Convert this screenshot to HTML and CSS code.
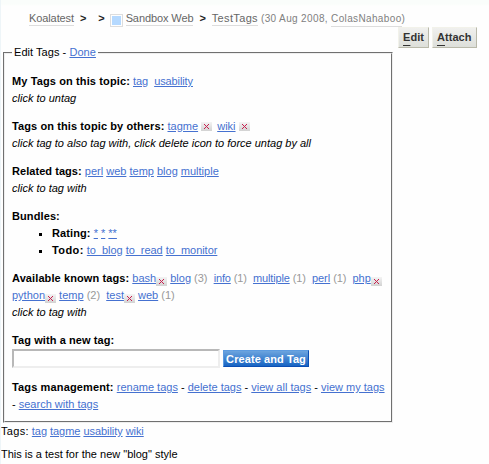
FILE: index.html
```html
<!DOCTYPE html>
<html lang="en">
<head>
<meta charset="utf-8">
<title>TestTags</title>
<link rel="stylesheet" href="styles.css">
</head>
<body>
<svg class="defs" width="0" height="0"><defs>
<linearGradient id="g" x1="0" y1="0" x2="0" y2="1"><stop offset="0" stop-color="#f4f4f4"/><stop offset="1" stop-color="#d2d2d2"/></linearGradient>
<symbol id="del" viewBox="0 0 11 9"><rect width="11" height="9" fill="url(#g)"/><path d="M3 2h1v1h1v1h1v-1h1v-1h1v1h-1v1h-1v1h1v1h1v1h-1v-1h-1v-1h-1v1h-1v1h-1v-1h1v-1h1v-1h-1v-1h-1z" fill="#c8204e"/></symbol>
</defs></svg>
<header class="crumbs"><a>Koalatest</a><b>&gt;</b><b class="second">&gt;</b><i class="swatch"></i><a>Sandbox Web</a><b class="third">&gt;</b><a class="topic">TestTags</a><small>(30 Aug 2008, <a>ColasNahaboo</a>)</small></header>
<nav class="actions"><a class="button"><u>E</u>dit</a><a class="button"><u>A</u>ttach</a></nav>
<fieldset class="panel">
<legend>Edit Tags - <a href="#">Done</a></legend>
<p class="mine"><b>My Tags on this topic:</b> <a href="#">tag</a>&nbsp; <a href="#">usability</a><br><em>click to untag</em></p>
<p><b>Tags on this topic by others:</b> <a href="#">tagme</a> <svg class="del mid"><use href="#del"/></svg>&nbsp;<a href="#">wiki</a> <svg class="del mid"><use href="#del"/></svg><br><em>click tag to also tag with, click delete icon to force untag by all</em></p>
<p class="related"><b>Related tags:</b> <a href="#">perl</a> <a href="#">web</a> <a href="#">temp</a> <a href="#">blog</a> <a href="#">multiple</a><br><em>click to tag with</em></p>
<p class="bundles"><b>Bundles:</b></p>
<ul><li><b>Rating:</b> <a href="#">*</a> <a href="#">*</a> <a href="#">**</a></li><li class="todo"><b>Todo:</b> <a href="#">to_blog</a> <a href="#">to_read</a> <a href="#">to_monitor</a></li></ul>
<p><b>Available known tags:</b> <a href="#">bash</a><svg class="del"><use href="#del"/></svg> <a href="#">blog</a> <span>(3)</span>&nbsp; <a href="#" class="tight">info</a> <span class="tight">(1)</span>&nbsp; <a href="#" class="tight">multiple</a> <span class="tight">(1)</span>&nbsp; <a href="#">perl</a> <span class="tight">(1)</span>&nbsp; <a href="#">php</a><svg class="del"><use href="#del"/></svg><br><a href="#">python</a><svg class="del"><use href="#del"/></svg> <a href="#">temp</a> <span>(2)</span>&nbsp; <a href="#">test</a><svg class="del"><use href="#del"/></svg> <a href="#">web</a> <span>(1)</span><br><em>click to tag with</em></p>
<form><label for="tag">Tag with a new tag:</label><div class="row"><input id="tag"><button type="button">Create and Tag</button></div></form>
<p class="manage"><b>Tags management:</b> <a href="#">rename tags</a> - <a href="#">delete tags</a> - <a href="#">view all tags</a> - <a href="#">view my tags</a><br>- <a href="#">search with tags</a></p>
</fieldset>
<p class="tags"><span>Tags:</span> <a href="#">tag</a> <a href="#">tagme</a> <a href="#">usability</a> <a href="#">wiki</a></p>
<p class="note">This is a test for the new "blog" style</p>
</body>
</html>
```
FILE: styles.css
```css
* { box-sizing: border-box; }
body { margin: 0; width: 489px; height: 464px; overflow: hidden; background: linear-gradient(#fafdfb 4px, #fefefe 6px); color: #000; font: 11px/17px "Liberation Sans", Arial, sans-serif; border-left: 1px solid #eef5f8; white-space: nowrap; }
.defs { position: absolute; }
p, ul, form { margin: 0 0 11px; padding: 0; }
a { color: #4571d0; }
.crumbs { display: flex; height: 27px; padding: 11px 0 0 28px; color: #666; align-items: flex-start; letter-spacing: -.1px; }
.crumbs a { color: #666; border-bottom: 1px solid #ddd; line-height: 14px; }
.crumbs b { color: #222; line-height: 14px; margin: 0 0 0 6px; }
.crumbs .second { margin: 0 5px 0 12px; }
.crumbs .third { margin: 0 6px; }
.crumbs .topic { letter-spacing: .35px; }
.crumbs small { font-size: 10px; line-height: 15px; color: #808080; margin-left: 3px; letter-spacing: .36px; }
.crumbs small a { color: #808080; display: inline-block; }
.swatch { width: 13px; height: 13px; margin: 3px 3px 0 0; border: 1px solid #ddd; background: #b5d9ff; background-clip: content-box; padding: 1px; }
.actions { display: flex; gap: 3px; height: 21px; padding-left: 397px; }
.button { height: 21px; padding: 0 4px; font-weight: bold; line-height: 18px; color: #333; background: linear-gradient(#f0f0ee, #dddfda); border: 1px solid; border-color: #f2f2ea #b9b9aa #b9b9aa #f2f2ea; letter-spacing: .05px; }
.button u { text-underline-offset: 4px; }
.panel { margin: -4px 0 0 2px; width: 390px; height: 379px; padding: 12px 8px 0; border: 1px solid; border-color: #707070 #eee #eee #707070; min-width: 0; position: relative; }
.panel::after { content: ""; position: absolute; z-index: -1; inset: -8px 0 0; border: 1px solid; border-color: #eee #707070 #707070 #eee; }
.panel legend { padding: 0 2px; line-height: 17px; background: #fefefe; letter-spacing: .05px; }
.panel b { letter-spacing: .1px; }
.panel .mine b { letter-spacing: .12px; }
.panel .mine a { letter-spacing: -.1px; }
.panel .related b { letter-spacing: .05px; }
.panel .todo b { letter-spacing: .4px; }
.panel .todo a { letter-spacing: -.04px; }
.panel .bundles { margin: 0; }
ul { list-style: square; padding-left: 40px; }
.panel span { color: #999; }
.panel .tight { letter-spacing: -.15px; }
.del { width: 11px; height: 9px; vertical-align: -4px; }
.del.mid { vertical-align: -1px; margin-right: 2px; }
label { display: block; font-weight: bold; letter-spacing: .09px; }
.row { display: flex; gap: 3px; height: 19px; }
input { width: 208px; height: 19px; margin: 0; border: 2px solid; border-color: #b8b8b8 #eee #eee #b8b8b8; background: #fff; }
button { height: 17px; width: 86px; margin-top: 1px; padding: 0; color: #fff; font: bold 11px/14px "Liberation Sans", Arial, sans-serif; letter-spacing: .08px; border: 1px solid; border-color: #5c9be0 #0b4eb4 #0b4eb4 #5c9be0; background: linear-gradient(#6ca4de, #1764c3); }
.panel .manage b { letter-spacing: .14px; }
.tags { margin: 0 0 6px; }
.tags span { letter-spacing: .3px; }
.tags a { letter-spacing: -.06px; }
```
